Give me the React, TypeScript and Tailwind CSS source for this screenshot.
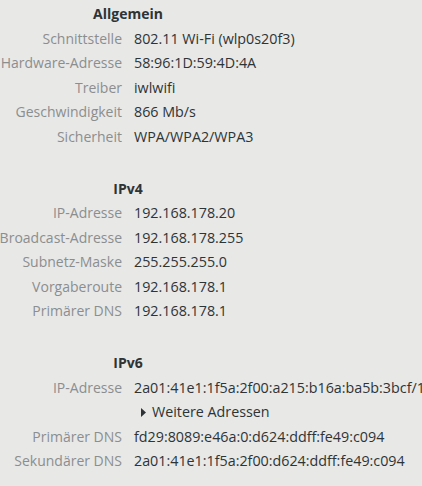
import React from 'react';

type Row = { label: string; value: React.ReactNode };

const sections: { title: string; rows: Row[] }[] = [
  {
    title: 'Allgemein',
    rows: [
      { label: 'Schnittstelle', value: '802.11 Wi-Fi (wlp0s20f3)' },
      { label: 'Hardware-Adresse', value: '58:96:1D:59:4D:4A' },
      { label: 'Treiber', value: 'iwlwifi' },
      { label: 'Geschwindigkeit', value: '866 Mb/s' },
      { label: 'Sicherheit', value: 'WPA/WPA2/WPA3' },
    ],
  },
  {
    title: 'IPv4',
    rows: [
      { label: 'IP-Adresse', value: '192.168.178.20' },
      { label: 'Broadcast-Adresse', value: '192.168.178.255' },
      { label: 'Subnetz-Maske', value: '255.255.255.0' },
      { label: 'Vorgaberoute', value: '192.168.178.1' },
      { label: 'Primärer DNS', value: '192.168.178.1' },
    ],
  },
  {
    title: 'IPv6',
    rows: [
      { label: 'IP-Adresse', value: '2a01:41e1:1f5a:2f00:a215:b16a:ba5b:3bcf/128' },
      {
        label: '',
        value: (
          <span className="flex items-center gap-[6px] pl-[7px]">
            <svg width="5" height="9" viewBox="0 0 5 9">
              <path d="M0 0 L5 4.5 L0 9 Z" fill="#2e3436" />
            </svg>
            Weitere Adressen
          </span>
        ),
      },
      { label: 'Primärer DNS', value: 'fd29:8089:e46a:0:d624:ddff:fe49:c094' },
      { label: 'Sekundärer DNS', value: '2a01:41e1:1f5a:2f00:d624:ddff:fe49:c094' },
    ],
  },
];

export default function App() {
  return (
    <div
      className="w-[422px] h-[486px] overflow-hidden bg-[#e8e8e7] pt-[2px] flex flex-col gap-[27.5px] text-[14px]"
      style={{ fontFamily: '"Open Sans", "Noto Sans", sans-serif' }}
    >
      {sections.map((section) => (
        <div key={section.title} className="flex flex-col">
          <div className="w-[256px] text-center font-bold text-[#2e3436] leading-[24.5px]">
            {section.title}
          </div>
          {section.rows.map((row, i) => (
            <div key={i} className="flex leading-[24.5px] h-[24.5px] whitespace-nowrap">
              <div className="w-[122px] shrink-0 flex justify-end text-[#8b8e8f]">
                <span>{row.label}</span>
              </div>
              <div className="pl-[12px] text-[14.3px] text-[#2e3436]">{row.value}</div>
            </div>
          ))}
        </div>
      ))}
    </div>
  );
}
